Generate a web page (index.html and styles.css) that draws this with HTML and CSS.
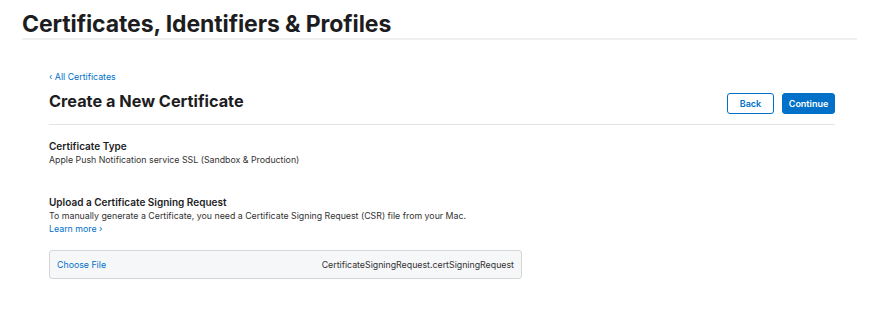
FILE: index.html
```html
<!DOCTYPE html>
<html lang="en">
<head>
  <meta charset="UTF-8">
  <title>Create a New Certificate</title>
  <link rel="stylesheet" href="styles.css">
</head>
<body>
  <header class="page-header">
    <h1>Certificates, Identifiers &amp; Profiles</h1>
  </header>

  <main class="content">
    <a class="back-link" href="#">&lsaquo; All Certificates</a>

    <div class="title-row">
      <h2>Create a New Certificate</h2>
      <div class="actions">
        <button class="btn btn-secondary">Back</button>
        <button class="btn btn-primary">Continue</button>
      </div>
    </div>

    <section class="section">
      <h3>Certificate Type</h3>
      <p>Apple Push Notification service SSL (Sandbox &amp; Production)</p>
    </section>

    <section class="section upload">
      <h3>Upload a Certificate Signing Request</h3>
      <p>To manually generate a Certificate, you need a Certificate Signing Request (CSR) file from your Mac.</p>
      <a class="learn-more" href="#">Learn more &rsaquo;</a>
    </section>

    <div class="file-box">
      <span class="choose">Choose File</span>
      <span class="file-name">CertificateSigningRequest.certSigningRequest</span>
    </div>
  </main>
</body>
</html>
```

FILE: styles.css
```css
body {
  margin: 0;
  font-family: Inter, "Noto Sans", sans-serif;
  background-color: #fff;
  color: #1d1d1f;
}
a {
  text-decoration: none;
  color: #0070c9;
}
.page-header {
  margin: 0 27px 0 22px;
  padding-top: 10px;
  border-bottom: 2px solid #f0f0f0;
}
.page-header h1 {
  margin: 0;
  font-size: 23px;
  line-height: 28px;
  font-weight: 700;
  letter-spacing: -0.1px;
}
.content {
  margin: 0 49px;
  width: 786px;
  padding-top: 30px;
}
.back-link {
  display: block;
  font-size: 8.8px;
  line-height: 13px;
}
.title-row {
  display: flex;
  justify-content: space-between;
  align-items: center;
  margin-top: 4px;
  padding-bottom: 9px;
  border-bottom: 1px solid #e3e3e3;
}
.title-row h2 {
  margin: 0;
  font-size: 16.3px;
  line-height: 28px;
  font-weight: 700;
}
.actions {
  display: flex;
  gap: 8px;
  margin-top: 5px;
}
.btn {
  height: 21px;
  padding: 0;
  border-radius: 3px;
  font-family: inherit;
  font-size: 9px;
  font-weight: 600;
  cursor: pointer;
}
.btn-secondary {
  width: 47px;
  background-color: #fff;
  color: #0070c9;
  border: 1px solid #0070c9;
}
.btn-primary {
  width: 53px;
  background-color: #0070c9;
  color: #fff;
  border: 1px solid #0070c9;
}
.section h3 {
  margin: 0;
  font-size: 10px;
  line-height: 14px;
  font-weight: 600;
}
.section p {
  margin: 0;
  font-size: 8.8px;
  line-height: 13px;
  color: #333;
}
.section:first-of-type {
  margin-top: 14px;
}
.upload {
  margin-top: 29px;
}
.learn-more {
  display: block;
  font-size: 8.8px;
  line-height: 13px;
}
.file-box {
  display: flex;
  justify-content: space-between;
  align-items: center;
  width: 473px;
  height: 29px;
  margin-top: 15px;
  padding: 0 7px;
  box-sizing: border-box;
  background-color: #f6f7f8;
  border: 1px solid #d6d6d6;
  border-radius: 3px;
  font-size: 8.8px;
}
.choose {
  color: #0070c9;
}
.file-name {
  color: #333;
}
```
